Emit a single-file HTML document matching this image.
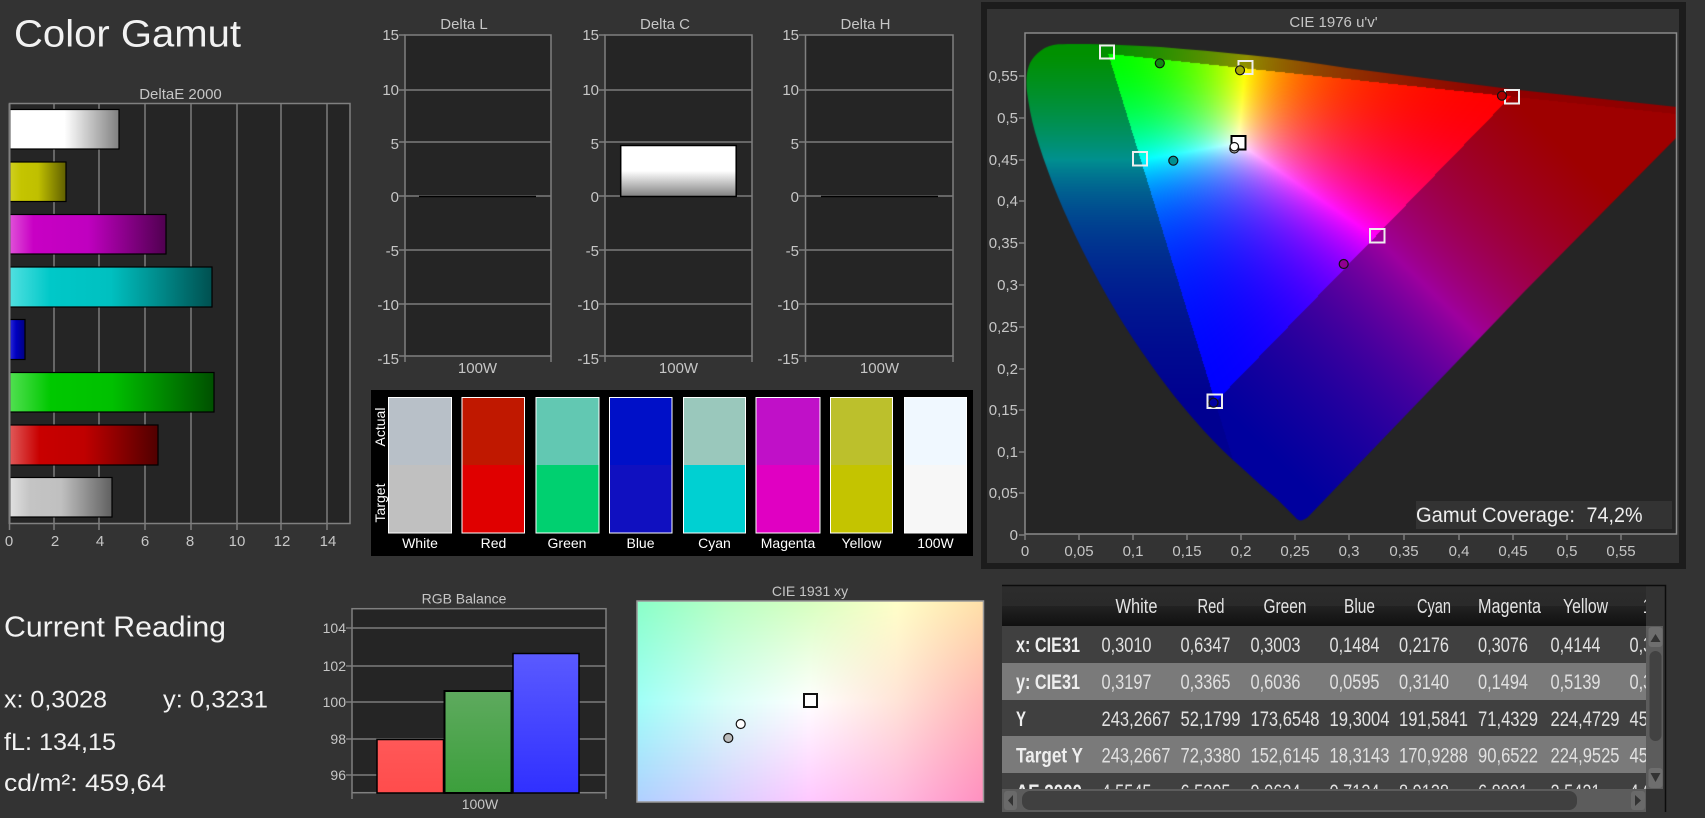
<!DOCTYPE html>
<html><head><meta charset="utf-8"><title>Color Gamut</title>
<style>
html,body{margin:0;padding:0;background:#333;width:1705px;height:818px;overflow:hidden}
.a{position:absolute}
svg{position:absolute;left:0;top:0}
text{font-family:"Liberation Sans",sans-serif;fill:#c6c6c6;font-size:15px}
.m{text-anchor:middle}.e{text-anchor:end}
.b{font-weight:bold;fill:#eee;font-size:21px}
.h{fill:#e4e4e4;font-size:20px}
.v{fill:#e0e0e0;font-size:21px}
.t{fill:#f2f2f2}
.g{stroke:#7c7c7c;stroke-width:1.5;fill:none}
.f{stroke:#808080;stroke-width:1.5;fill:#252525}
.s{stroke:#fff;stroke-width:1}
.q{fill:none;stroke:#eee;stroke-width:2}
.c{stroke:#111;stroke-width:1.2}
.l{fill:#fff;font-size:14px}
</style></head><body>
<div class="a" style="left:981px;top:2px;width:705px;height:567px;background:#1c1c1c"></div>
<div class="a" style="left:987px;top:9px;width:692px;height:554px;background:#333"></div>
<div class="a" style="left:1025px;top:33px;width:652px;height:501px;background:#252525"></div>
<canvas id="uv" class="a" width="652" height="501" style="left:1025px;top:33px"></canvas>
<canvas id="xy" class="a" width="347" height="201" style="left:637px;top:601px"></canvas>
<svg width="1705" height="818" viewBox="0 0 1705 818" xmlns="http://www.w3.org/2000/svg">
<defs>
<linearGradient id="bw"><stop offset="0" stop-color="#fff"/><stop offset=".5" stop-color="#fff"/><stop offset="1" stop-color="#808080"/></linearGradient>
<linearGradient id="by"><stop offset="0" stop-color="#d0d020"/><stop offset=".2" stop-color="#c4c400"/><stop offset=".5" stop-color="#c0c000"/><stop offset="1" stop-color="#605f00"/></linearGradient>
<linearGradient id="bm"><stop offset="0" stop-color="#e050d8"/><stop offset=".15" stop-color="#c800c4"/><stop offset=".5" stop-color="#c000c0"/><stop offset="1" stop-color="#500050"/></linearGradient>
<linearGradient id="bc"><stop offset="0" stop-color="#50e0e0"/><stop offset=".2" stop-color="#00c8c8"/><stop offset=".5" stop-color="#00c0c0"/><stop offset="1" stop-color="#005050"/></linearGradient>
<linearGradient id="bb"><stop offset="0" stop-color="#2828d8"/><stop offset=".4" stop-color="#0000c0"/><stop offset="1" stop-color="#000080"/></linearGradient>
<linearGradient id="bg"><stop offset="0" stop-color="#50e050"/><stop offset=".2" stop-color="#00c800"/><stop offset=".5" stop-color="#00c000"/><stop offset="1" stop-color="#005000"/></linearGradient>
<linearGradient id="br"><stop offset="0" stop-color="#e05858"/><stop offset=".2" stop-color="#c80000"/><stop offset=".5" stop-color="#c00000"/><stop offset="1" stop-color="#500000"/></linearGradient>
<linearGradient id="bk"><stop offset="0" stop-color="#e0e0e0"/><stop offset=".2" stop-color="#c4c4c4"/><stop offset=".5" stop-color="#c0c0c0"/><stop offset="1" stop-color="#606060"/></linearGradient>
<linearGradient id="dc" x2="0" y2="1"><stop offset="0" stop-color="#fff"/><stop offset=".5" stop-color="#fff"/><stop offset="1" stop-color="#808080"/></linearGradient>
<linearGradient id="rr" x2="0" y2="1"><stop offset="0" stop-color="#ff5858"/><stop offset="1" stop-color="#ff4c4c"/></linearGradient>
<linearGradient id="rg" x2="0" y2="1"><stop offset="0" stop-color="#5eaa5e"/><stop offset="1" stop-color="#3c9f3c"/></linearGradient>
<linearGradient id="rb" x2="0" y2="1"><stop offset="0" stop-color="#5a5aff"/><stop offset="1" stop-color="#3030ff"/></linearGradient>
<linearGradient id="hd" x2="0" y2="1"><stop offset="0" stop-color="#2c2c2c"/><stop offset=".5" stop-color="#2a2a2a"/><stop offset=".5" stop-color="#222"/><stop offset="1" stop-color="#101010"/></linearGradient>
<clipPath id="tc"><rect x="1002" y="586" width="644" height="203"/></clipPath>
</defs>

<text class="t" x="14" y="46.5" style="font-size:38px" textLength="227" lengthAdjust="spacingAndGlyphs">Color Gamut</text>

<!-- DeltaE chart -->
<text class="m" x="180.500" y="99">DeltaE 2000</text>
<rect class="f" x="9.500" y="103.500" width="340.500" height="420"/>
<path class="g" d="M54 104V524M99 104V524M145 104V524M191 104V524M237 104V524M281 104V524M327 104V524M9.500 524V530M54 524V530M99 524V530M145 524V530M191 524V530M237 524V530M281 524V530M327 524V530"/>
<g stroke="#000" stroke-width="1.2">
<rect x="10" y="109.500" width="109" height="39.500" fill="url(#bw)"/>
<rect x="10" y="162" width="56" height="39.500" fill="url(#by)"/>
<rect x="10" y="214.500" width="156" height="39.500" fill="url(#bm)"/>
<rect x="10" y="267" width="202" height="40" fill="url(#bc)"/>
<rect x="10" y="319.500" width="15" height="40" fill="url(#bb)"/>
<rect x="10" y="372.500" width="204" height="39.500" fill="url(#bg)"/>
<rect x="10" y="425" width="148" height="40" fill="url(#br)"/>
<rect x="10" y="477.500" width="102" height="39.500" fill="url(#bk)"/>
</g>
<path d="M9.500 103.500V524" stroke="#808080" stroke-width="2" fill="none"/>
<text class="m" x="9" y="546">0</text><text class="m" x="55" y="546">2</text><text class="m" x="100" y="546">4</text><text class="m" x="145" y="546">6</text><text class="m" x="190" y="546">8</text><text class="m" x="237" y="546">10</text><text class="m" x="282" y="546">12</text><text class="m" x="328" y="546">14</text>

<!-- Delta L -->
<text class="m" x="464" y="29">Delta L</text>
<rect class="f" x="405" y="35" width="146" height="321"/>
<path class="g" d="M399 35H405M399 90H551M399 142H551M399 196H551M399 250H551M399 304H551M399 356H405M405 356V362M551 356V362"/>
<path stroke="#000" stroke-width="1.5" d="M419 196.500H536"/>
<text class="e" x="399" y="40">15</text><text class="e" x="399" y="95">10</text><text class="e" x="399" y="149">5</text><text class="e" x="399" y="202">0</text><text class="e" x="399" y="256">-5</text><text class="e" x="399" y="310">-10</text><text class="e" x="399" y="364">-15</text>
<text class="m" x="477.500" y="373">100W</text>

<!-- Delta C -->
<text class="m" x="665" y="29">Delta C</text>
<rect class="f" x="605" y="35" width="147" height="321"/>
<path class="g" d="M599 35H605M599 90H752M599 142H752M599 196H752M599 250H752M599 304H752M599 356H605M605 356V362M752 356V362"/>
<rect x="620.700" y="145.500" width="115.500" height="51" fill="url(#dc)" stroke="#000" stroke-width="1.5"/>
<text class="e" x="599" y="40">15</text><text class="e" x="599" y="95">10</text><text class="e" x="599" y="149">5</text><text class="e" x="599" y="202">0</text><text class="e" x="599" y="256">-5</text><text class="e" x="599" y="310">-10</text><text class="e" x="599" y="364">-15</text>
<text class="m" x="678.500" y="373">100W</text>

<!-- Delta H -->
<text class="m" x="865.500" y="29">Delta H</text>
<rect class="f" x="805.500" y="35" width="147.500" height="321"/>
<path class="g" d="M799 35H805M799 90H953M799 142H953M799 196H953M799 250H953M799 304H953M799 356H805M805.500 356V362M953 356V362"/>
<path stroke="#000" stroke-width="1.5" d="M821 196.500H938"/>
<text class="e" x="799" y="40">15</text><text class="e" x="799" y="95">10</text><text class="e" x="799" y="149">5</text><text class="e" x="799" y="202">0</text><text class="e" x="799" y="256">-5</text><text class="e" x="799" y="310">-10</text><text class="e" x="799" y="364">-15</text>
<text class="m" x="879.500" y="373">100W</text>

<!-- Patches -->
<rect x="371" y="390" width="602" height="166" fill="#000"/>
<g>
<rect x="388.500" y="397.500" width="63" height="68" fill="#b8c0c8"/><rect x="388.500" y="465" width="63" height="68" fill="#c0c0c0"/><rect class="s" x="388.500" y="397.500" width="63" height="135.500" fill="none"/>
<rect x="462" y="397.500" width="62.500" height="68" fill="#c01800"/><rect x="462" y="465" width="62.500" height="68" fill="#e00000"/><rect class="s" x="462" y="397.500" width="62.500" height="135.500" fill="none"/>
<rect x="536" y="397.500" width="63" height="68" fill="#62c8b2"/><rect x="536" y="465" width="63" height="68" fill="#00d070"/><rect class="s" x="536" y="397.500" width="63" height="135.500" fill="none"/>
<rect x="609.500" y="397.500" width="62.500" height="68" fill="#0010c8"/><rect x="609.500" y="465" width="62.500" height="68" fill="#1010c0"/><rect class="s" x="609.500" y="397.500" width="62.500" height="135.500" fill="none"/>
<rect x="683.500" y="397.500" width="62" height="68" fill="#9ac8bc"/><rect x="683.500" y="465" width="62" height="68" fill="#00d0d2"/><rect class="s" x="683.500" y="397.500" width="62" height="135.500" fill="none"/>
<rect x="756" y="397.500" width="64" height="68" fill="#c010c8"/><rect x="756" y="465" width="64" height="68" fill="#e000c2"/><rect class="s" x="756" y="397.500" width="64" height="135.500" fill="none"/>
<rect x="830.500" y="397.500" width="62" height="68" fill="#bcc02c"/><rect x="830.500" y="465" width="62" height="68" fill="#c4c400"/><rect class="s" x="830.500" y="397.500" width="62" height="135.500" fill="none"/>
<rect x="904.500" y="397.500" width="62" height="68" fill="#f0f8ff"/><rect x="904.500" y="465" width="62" height="68" fill="#f7f7f7"/><rect class="s" x="904.500" y="397.500" width="62" height="135.500" fill="none"/>
</g>
<text class="l m" transform="translate(385,427) rotate(-90)" x="0" y="0">Actual</text>
<text class="l m" transform="translate(385,503) rotate(-90)" x="0" y="0">Target</text>
<text class="l m" x="420" y="548">White</text><text class="l m" x="493.500" y="548">Red</text><text class="l m" x="567" y="548">Green</text><text class="l m" x="640.500" y="548">Blue</text><text class="l m" x="714.500" y="548">Cyan</text><text class="l m" x="788" y="548">Magenta</text><text class="l m" x="861.500" y="548">Yellow</text><text class="l m" x="935.500" y="548">100W</text>

<!-- CIE 1976 -->
<text class="m" x="1333.500" y="27">CIE 1976 u'v'</text>
<rect x="1025" y="33" width="651.500" height="501" fill="none" stroke="#8a8a8a" stroke-width="1.5"/>
<path class="g" d="M1019 76H1025M1019 118H1025M1019 160H1025M1019 201H1025M1019 243H1025M1019 285H1025M1019 327H1025M1019 369H1025M1019 410H1025M1019 452H1025M1019 493H1025M1019 535H1025M1025 534V540M1079 534V540M1133 534V540M1187 534V540M1241 534V540M1295 534V540M1349 534V540M1404 534V540M1459 534V540M1513 534V540M1567 534V540M1621 534V540"/>
<text class="e" x="1018" y="81">0,55</text><text class="e" x="1018" y="123">0,5</text><text class="e" x="1018" y="165">0,45</text><text class="e" x="1018" y="206">0,4</text><text class="e" x="1018" y="248">0,35</text><text class="e" x="1018" y="290">0,3</text><text class="e" x="1018" y="332">0,25</text><text class="e" x="1018" y="374">0,2</text><text class="e" x="1018" y="415">0,15</text><text class="e" x="1018" y="457">0,1</text><text class="e" x="1018" y="498">0,05</text><text class="e" x="1018" y="540">0</text>
<text class="m" x="1025" y="556">0</text><text class="m" x="1079" y="556">0,05</text><text class="m" x="1133" y="556">0,1</text><text class="m" x="1187" y="556">0,15</text><text class="m" x="1241" y="556">0,2</text><text class="m" x="1295" y="556">0,25</text><text class="m" x="1349" y="556">0,3</text><text class="m" x="1404" y="556">0,35</text><text class="m" x="1459" y="556">0,4</text><text class="m" x="1513" y="556">0,45</text><text class="m" x="1567" y="556">0,5</text><text class="m" x="1621" y="556">0,55</text>
<rect x="1416" y="501" width="256" height="28" fill="#333"/>
<text x="1416" y="522" style="font-size:21px;fill:#eee" textLength="159" lengthAdjust="spacingAndGlyphs">Gamut Coverage:</text>
<text x="1586.500" y="522" style="font-size:21px;fill:#eee" textLength="56" lengthAdjust="spacingAndGlyphs">74,2%</text>
<rect class="q" x="1100" y="45.500" width="14" height="13"/>
<rect class="q" x="1238.500" y="61" width="14" height="13"/>
<rect class="q" x="1505" y="90" width="14" height="13.500"/>
<rect class="q" x="1133" y="152" width="14" height="13.500"/>
<rect class="q" x="1370" y="229" width="14.500" height="13.500"/>
<rect class="q" x="1207.500" y="394.500" width="14.500" height="13.500"/>
<circle class="c" cx="1159.800" cy="63.300" r="4.500" fill="#118a11"/>
<circle class="c" cx="1240" cy="70.300" r="4.500" fill="#a8a800"/>
<circle class="c" cx="1502" cy="95.700" r="4.500" fill="#a80000"/>
<circle class="c" cx="1173.300" cy="160.700" r="4.500" fill="#009090"/>
<circle class="c" cx="1343.700" cy="264" r="4.500" fill="#900090"/>
<circle class="c" cx="1213.500" cy="402.700" r="4.500" fill="#0000a0"/>
<rect x="1231.500" y="136" width="14" height="13.500" fill="#fff" stroke="#000" stroke-width="2"/>
<circle class="c" cx="1234.300" cy="148.500" r="4.500" fill="#bbb"/>
<circle class="c" cx="1234.300" cy="146.700" r="4.200" fill="#fff"/>

<!-- Current reading -->
<text class="t" x="4" y="636.500" style="font-size:29px" textLength="222" lengthAdjust="spacingAndGlyphs">Current Reading</text>
<text class="t" x="4" y="707.500" style="font-size:24px" textLength="103" lengthAdjust="spacingAndGlyphs">x: 0,3028</text>
<text class="t" x="163" y="707.500" style="font-size:24px" textLength="105" lengthAdjust="spacingAndGlyphs">y: 0,3231</text>
<text class="t" x="4" y="750" style="font-size:24px" textLength="112" lengthAdjust="spacingAndGlyphs">fL: 134,15</text>
<text class="t" x="4" y="791" style="font-size:24px" textLength="162" lengthAdjust="spacingAndGlyphs">cd/m²: 459,64</text>

<!-- RGB balance -->
<text class="m" x="464" y="603.500" style="font-size:14px">RGB Balance</text>
<rect class="f" x="352" y="608.700" width="254" height="184"/>
<path class="g" d="M346 628H606M346 666H606M346 702H606M346 739H606M346 775H606M352 793V799M606 793V799"/>
<g stroke="#000" stroke-width="1.5">
<rect x="377" y="739.500" width="66.500" height="53.500" fill="url(#rr)"/>
<rect x="444.500" y="691" width="67" height="102" fill="url(#rg)" stroke-width="2"/>
<rect x="513" y="653.500" width="66" height="139.500" fill="url(#rb)"/>
</g>
<text class="e" x="346" y="633" style="font-size:14px">104</text><text class="e" x="346" y="671" style="font-size:14px">102</text><text class="e" x="346" y="707" style="font-size:14px">100</text><text class="e" x="346" y="744" style="font-size:14px">98</text><text class="e" x="346" y="780" style="font-size:14px">96</text>
<text class="m" x="480" y="809" style="font-size:14px">100W</text>

<!-- CIE 1931 -->
<text class="m" x="810" y="596" style="font-size:14px">CIE 1931 xy</text>
<rect x="637" y="601" width="346.500" height="201" fill="none" stroke="#999" stroke-width="1.5"/>
<rect x="804" y="694" width="13" height="13" fill="#fff" stroke="#111" stroke-width="2"/>
<circle class="c" cx="740.700" cy="724" r="4.500" fill="#fff"/>
<circle class="c" cx="728.300" cy="738" r="4.500" fill="#bbb"/>

<!-- Table -->
<rect x="1002" y="585" width="663.500" height="227" fill="#333"/>
<rect x="1002" y="586" width="644" height="40" fill="url(#hd)"/>
<rect x="1002" y="626" width="644" height="37" fill="#404040"/>
<rect x="1002" y="663" width="644" height="37" fill="#7a7a7a"/>
<rect x="1002" y="700" width="644" height="36" fill="#404040"/>
<rect x="1002" y="736" width="644" height="37" fill="#7a7a7a"/>
<rect x="1002" y="773" width="644" height="16" fill="#404040"/>
<g clip-path="url(#tc)">
<text class="h" x="1115.500" y="613" textLength="42" lengthAdjust="spacingAndGlyphs">White</text>
<text class="h" x="1197.500" y="613" textLength="27" lengthAdjust="spacingAndGlyphs">Red</text>
<text class="h" x="1263.500" y="613" textLength="43" lengthAdjust="spacingAndGlyphs">Green</text>
<text class="h" x="1344" y="613" textLength="31" lengthAdjust="spacingAndGlyphs">Blue</text>
<text class="h" x="1417" y="613" textLength="34" lengthAdjust="spacingAndGlyphs">Cyan</text>
<text class="h" x="1478" y="613" textLength="63" lengthAdjust="spacingAndGlyphs">Magenta</text>
<text class="h" x="1563" y="613" textLength="45" lengthAdjust="spacingAndGlyphs">Yellow</text>
<text class="h" x="1643" y="613" textLength="34" lengthAdjust="spacingAndGlyphs">100W</text>

<text class="b" x="1016" y="652" textLength="64" lengthAdjust="spacingAndGlyphs">x: CIE31</text>
<text class="v" x="1101.500" y="652" textLength="50" lengthAdjust="spacingAndGlyphs">0,3010</text>
<text class="v" x="1180.500" y="652" textLength="50" lengthAdjust="spacingAndGlyphs">0,6347</text>
<text class="v" x="1250.500" y="652" textLength="50" lengthAdjust="spacingAndGlyphs">0,3003</text>
<text class="v" x="1329.500" y="652" textLength="50" lengthAdjust="spacingAndGlyphs">0,1484</text>
<text class="v" x="1399" y="652" textLength="50" lengthAdjust="spacingAndGlyphs">0,2176</text>
<text class="v" x="1478" y="652" textLength="50" lengthAdjust="spacingAndGlyphs">0,3076</text>
<text class="v" x="1550.500" y="652" textLength="50" lengthAdjust="spacingAndGlyphs">0,4144</text>
<text class="v" x="1629.500" y="652" textLength="50" lengthAdjust="spacingAndGlyphs">0,3028</text>

<text class="b" x="1016" y="689" textLength="64" lengthAdjust="spacingAndGlyphs">y: CIE31</text>
<text class="v" x="1101.500" y="689" textLength="50" lengthAdjust="spacingAndGlyphs">0,3197</text>
<text class="v" x="1180.500" y="689" textLength="50" lengthAdjust="spacingAndGlyphs">0,3365</text>
<text class="v" x="1250.500" y="689" textLength="50" lengthAdjust="spacingAndGlyphs">0,6036</text>
<text class="v" x="1329.500" y="689" textLength="50" lengthAdjust="spacingAndGlyphs">0,0595</text>
<text class="v" x="1399" y="689" textLength="50" lengthAdjust="spacingAndGlyphs">0,3140</text>
<text class="v" x="1478" y="689" textLength="50" lengthAdjust="spacingAndGlyphs">0,1494</text>
<text class="v" x="1550.500" y="689" textLength="50" lengthAdjust="spacingAndGlyphs">0,5139</text>
<text class="v" x="1629.500" y="689" textLength="50" lengthAdjust="spacingAndGlyphs">0,3231</text>

<text class="b" x="1016" y="726" textLength="10" lengthAdjust="spacingAndGlyphs">Y</text>
<text class="v" x="1101.500" y="726" textLength="69" lengthAdjust="spacingAndGlyphs">243,2667</text>
<text class="v" x="1180.500" y="726" textLength="60" lengthAdjust="spacingAndGlyphs">52,1799</text>
<text class="v" x="1250.500" y="726" textLength="69" lengthAdjust="spacingAndGlyphs">173,6548</text>
<text class="v" x="1329.500" y="726" textLength="60" lengthAdjust="spacingAndGlyphs">19,3004</text>
<text class="v" x="1399" y="726" textLength="69" lengthAdjust="spacingAndGlyphs">191,5841</text>
<text class="v" x="1478" y="726" textLength="60" lengthAdjust="spacingAndGlyphs">71,4329</text>
<text class="v" x="1550.500" y="726" textLength="69" lengthAdjust="spacingAndGlyphs">224,4729</text>
<text class="v" x="1629.500" y="726" textLength="69" lengthAdjust="spacingAndGlyphs">459,6400</text>

<text class="b" x="1016" y="762.500" textLength="67" lengthAdjust="spacingAndGlyphs">Target Y</text>
<text class="v" x="1101.500" y="762.500" textLength="69" lengthAdjust="spacingAndGlyphs">243,2667</text>
<text class="v" x="1180.500" y="762.500" textLength="60" lengthAdjust="spacingAndGlyphs">72,3380</text>
<text class="v" x="1250.500" y="762.500" textLength="69" lengthAdjust="spacingAndGlyphs">152,6145</text>
<text class="v" x="1329.500" y="762.500" textLength="60" lengthAdjust="spacingAndGlyphs">18,3143</text>
<text class="v" x="1399" y="762.500" textLength="69" lengthAdjust="spacingAndGlyphs">170,9288</text>
<text class="v" x="1478" y="762.500" textLength="60" lengthAdjust="spacingAndGlyphs">90,6522</text>
<text class="v" x="1550.500" y="762.500" textLength="69" lengthAdjust="spacingAndGlyphs">224,9525</text>
<text class="v" x="1629.500" y="762.500" textLength="69" lengthAdjust="spacingAndGlyphs">459,6400</text>

<text class="b" x="1016" y="799" textLength="66" lengthAdjust="spacingAndGlyphs">ΔE 2000</text>
<text class="v" x="1101.500" y="799" textLength="50" lengthAdjust="spacingAndGlyphs">4,5545</text>
<text class="v" x="1180.500" y="799" textLength="50" lengthAdjust="spacingAndGlyphs">6,5205</text>
<text class="v" x="1250.500" y="799" textLength="50" lengthAdjust="spacingAndGlyphs">9,0634</text>
<text class="v" x="1329.500" y="799" textLength="50" lengthAdjust="spacingAndGlyphs">0,7134</text>
<text class="v" x="1399" y="799" textLength="50" lengthAdjust="spacingAndGlyphs">8,9138</text>
<text class="v" x="1478" y="799" textLength="50" lengthAdjust="spacingAndGlyphs">6,8991</text>
<text class="v" x="1550.500" y="799" textLength="50" lengthAdjust="spacingAndGlyphs">2,5421</text>
<text class="v" x="1629.500" y="799" textLength="50" lengthAdjust="spacingAndGlyphs">4,6000</text>
</g>
<!-- scrollbars -->
<rect x="1002" y="789" width="644" height="23" fill="#5c5c5c"/>
<rect x="1022" y="791" width="555" height="19" rx="8" fill="#404040"/>
<rect x="1004" y="791" width="13" height="19" rx="3" fill="#6a6a6a"/>
<path d="M1013 795L1008 800.500L1013 806Z" fill="#333"/>
<rect x="1631" y="791" width="14" height="19" rx="3" fill="#6a6a6a"/>
<path d="M1635 795L1641 800.500L1635 806Z" fill="#333"/>
<rect x="1646" y="626" width="17" height="163" fill="#5c5c5c"/>
<rect x="1649.500" y="651" width="12" height="90" rx="6" fill="#424242"/>
<rect x="1648.500" y="627" width="14" height="20" rx="3" fill="#6e6e6e"/>
<path d="M1650.500 642L1655.500 634L1660.500 642Z" fill="#333"/>
<rect x="1648.500" y="768" width="14" height="20" rx="3" fill="#6e6e6e"/>
<path d="M1650.500 773L1655.500 782L1660.500 773Z" fill="#333"/>
<path d="M1002 585.500H1665.500V812" fill="none" stroke="#0c0c0c" stroke-width="1.500"/>
</svg>
<script>
(function(){
var off=document.createElement('canvas');off.width=652;off.height=501;
var o=off.getContext('2d'),im=o.createImageData(652,501),d=im.data;
var R=[1510.4,96],G=[1107.7,53.3],B=[1214.8,401.7],W=[1238,142.7];
var D=(G[1]-B[1])*(R[0]-B[0])+(B[0]-G[0])*(R[1]-B[1]);
function bc(x,y){var a=((G[1]-B[1])*(x-B[0])+(B[0]-G[0])*(y-B[1]))/D;var b=((B[1]-R[1])*(x-B[0])+(R[0]-B[0])*(y-B[1]))/D;return [a,b,1-a-b];}
function cl(v){return v<0?0:(v>1?1:v);}
function pr(x,y,P,Q){var dx=Q[0]-P[0],dy=Q[1]-P[1];return cl(((x-P[0])*dx+(y-P[1])*dy)/(dx*dx+dy*dy));}
var w=bc(W[0],W[1]);
for(var j=0;j<501;j++){for(var i=0;i<652;i++){
var x=i+1025,y=j+33,t=bc(x,y),r=0,g=0,b=0,p=1,f=255,s;
if(t[0]>=0&&t[1]>=0&&t[2]>=0){r=t[0]/w[0];g=t[1]/w[1];b=t[2]/w[2];p=1.5;}
else if(t[0]<0){s=cl((y-G[1])/(B[1]-G[1]));g=(1-s)/w[1];b=s/w[2];f=144;}
else if(t[2]<0){s=pr(x,y,G,R);g=(1-s)/w[1];r=s/w[0];f=144;}
else{s=pr(x,y,B,R);b=(1-s)/w[2];r=s/w[0];f=158;}
var m=Math.max(r,g,b)||1;r/=m;g/=m;b/=m;
var k=(j*652+i)*4;
d[k]=Math.pow(r,p)*f;d[k+1]=Math.pow(g,p)*f;d[k+2]=Math.pow(b,p)*f;d[k+3]=255;
}}
o.putImageData(im,0,0);
var c=document.getElementById('uv').getContext('2d');
c.translate(-1025,-33);
c.clip(new Path2D("M1677 107L1510 89L1347 68C1280 57 1220 52 1161 47C1130 45 1085 43 1058 44.3C1045 45 1035 54 1030 63C1026 72 1026 82 1027 92C1029 106 1031 118 1035 132C1040 149 1046 166 1052 182C1059 200 1067 218 1075 235C1085 256 1096 277 1108 298C1119 317 1130 335 1142 352C1153 368 1164 383 1175 397C1185 409 1195 421 1205 432C1217 445 1229 457 1242 468C1254 479 1266 490 1278 500L1295 517C1298 521 1302 522 1308 517L1523 293L1677 137Z"));
c.drawImage(off,1025,33);

var xy=document.getElementById('xy'),q=xy.getContext('2d'),W2=xy.width,H2=xy.height,im2=q.createImageData(W2,H2),e=im2.data;
var g2=[["8affc8","b8ffc4","d8ffc0","ffffc8","ffe0a8"],["a0fff8","d8fff8","ffffff","ffe4d8","ffb4b4"],["b0d0ff","d8d0ff","ffc8ff","ffb8e0","ff90c0"]].map(function(r){return r.map(function(h){return [parseInt(h.substr(0,2),16),parseInt(h.substr(2,2),16),parseInt(h.substr(4,2),16)];});});
for(var yy=0;yy<H2;yy++){for(var xx=0;xx<W2;xx++){
var u=xx/(W2-1)*4,v=yy/(H2-1)*2,a=Math.min(Math.floor(u),3),n=Math.min(Math.floor(v),1),fu=u-a,fv=v-n,kk=(yy*W2+xx)*4;
for(var ch=0;ch<3;ch++){e[kk+ch]=(g2[n][a][ch]*(1-fu)+g2[n][a+1][ch]*fu)*(1-fv)+(g2[n+1][a][ch]*(1-fu)+g2[n+1][a+1][ch]*fu)*fv;}
e[kk+3]=255;
}}
q.putImageData(im2,0,0);
})();
</script>
</body></html>
